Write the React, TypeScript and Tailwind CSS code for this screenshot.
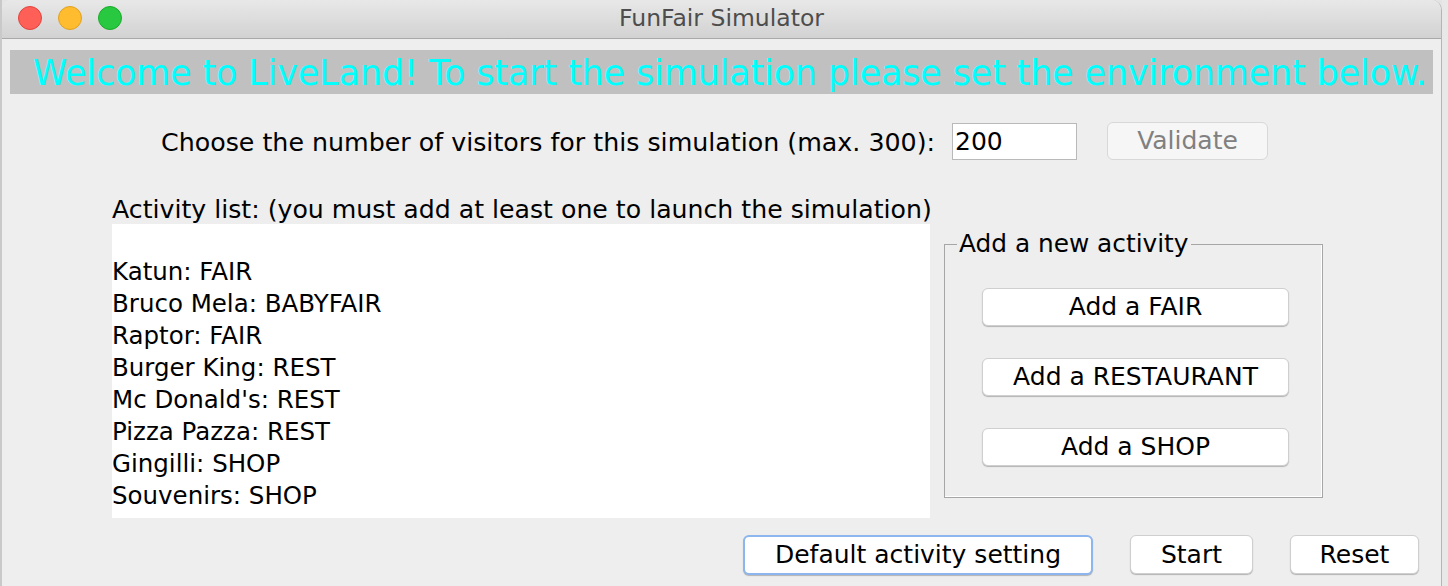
import React from "react";

const activities = [
  "",
  "Katun: FAIR",
  "Bruco Mela: BABYFAIR",
  "Raptor: FAIR",
  "Burger King: REST",
  "Mc Donald's: REST",
  "Pizza Pazza: REST",
  "Gingilli: SHOP",
  "Souvenirs: SHOP",
];

const font = { fontFamily: '"DejaVu Sans", "Liberation Sans", sans-serif' };

function MacButton({
  label,
  className = "",
  focused = false,
}: {
  label: string;
  className?: string;
  focused?: boolean;
}) {
  return (
    <button
      type="button"
      className={
        "flex items-center justify-center rounded-[6px] bg-white text-[25px] text-black shadow-[0_1px_1px_rgba(0,0,0,0.25)] " +
        (focused
          ? "border-2 border-[#8db5ee] "
          : "border border-[#cfcfcf] ") +
        className
      }
    >
      {label}
    </button>
  );
}

export default function App() {
  return (
    <div className="flex h-[586px] w-[1448px] overflow-hidden bg-[#e4e4e4]" style={font}>
      <div className="w-[2px] bg-[#c9c9c9]" />
      {/* window */}
      <div className="flex w-[1440px] flex-col overflow-hidden rounded-t-[10px] border-r border-[#b5b5b5] bg-[#eeeeee]">
        {/* title bar */}
        <div className="relative flex h-[39px] shrink-0 items-center justify-center border-b border-[#a9a9a9] bg-gradient-to-b from-[#e8e8e8] to-[#d2d2d2]">
          <div className="absolute left-[16px] top-[6px] flex gap-[16px]">
            <span className="h-[24px] w-[24px] rounded-full border border-[#e0443e] bg-[#fe5f57]" />
            <span className="h-[24px] w-[24px] rounded-full border border-[#dea123] bg-[#febc2e]" />
            <span className="h-[24px] w-[24px] rounded-full border border-[#1aab29] bg-[#28c840]" />
          </div>
          <span className="text-[23.5px] text-[#4d4d4d]">FunFair Simulator</span>
        </div>

        {/* banner */}
        <div className="mx-[8px] mt-[11px] flex h-[44px] items-center bg-[#c0c0c0] pl-[23px] pt-[3px]">
          <span className="whitespace-nowrap text-[34.7px] leading-none text-[#00ffff]">
            Welcome to LiveLand! To start the simulation please set the environment below.
          </span>
        </div>

        {/* visitors row */}
        <div className="mt-[28px] flex h-[38px] items-center pl-[159px]">
          <span className="w-[791px] whitespace-nowrap pt-[4px] text-[25.3px] text-black">
            Choose the number of visitors for this simulation (max. 300):
          </span>
          <div className="flex h-[37px] w-[125px] items-center border border-[#b9b9b9] bg-white pl-[2px] pt-[2px] text-[25px] text-black">
            200
          </div>
          <button
            type="button"
            className="ml-[30px] flex h-[38px] w-[161px] items-center justify-center rounded-[6px] border border-[#d8d8d8] bg-[#f6f6f6] text-[25px] text-[#808080]"
          >
            Validate
          </button>
        </div>

        {/* main area */}
        <div className="mt-[34px] flex pl-[110px]">
          <div className="flex w-[818px] flex-col">
            <div className="flex h-[30px] items-center whitespace-nowrap pt-[2px] text-[25.2px] text-black">
              Activity list: (you must add at least one to launch the simulation)
            </div>
            <div className="h-[294px] bg-white">
              {activities.map((a, i) => (
                <div key={i} className="flex h-[32px] items-center whitespace-nowrap pt-[1px] text-[24.5px] text-black">
                  {a}
                </div>
              ))}
            </div>
          </div>

          {/* group box */}
          <div className="relative ml-[14px] mt-[50px] h-[254px] w-[379px] border border-[#a6a6a6] shadow-[inset_-1px_-1px_0_#ffffff]">
            <span className="absolute left-[12px] top-[-17px] bg-[#eeeeee] px-[2px] text-[24.8px] leading-[32px] text-black">
              Add a new activity
            </span>
            <div className="flex flex-col items-start pl-[37px] pt-[43px]">
              <MacButton label="Add a FAIR" className="h-[38px] w-[307px]" />
              <MacButton label="Add a RESTAURANT" className="mt-[32px] h-[38px] w-[307px]" />
              <MacButton label="Add a SHOP" className="mt-[32px] h-[38px] w-[307px]" />
            </div>
          </div>
        </div>

        {/* bottom buttons */}
        <div className="mt-[17px] flex pl-[741px]">
          <MacButton label="Default activity setting" focused className="h-[40px] w-[350px]" />
          <MacButton label="Start" className="ml-[37px] h-[39px] w-[123px]" />
          <MacButton label="Reset" className="ml-[37px] h-[39px] w-[129px]" />
        </div>
      </div>
      <div className="w-[6px] bg-[#e8e8e8]" />
    </div>
  );
}
